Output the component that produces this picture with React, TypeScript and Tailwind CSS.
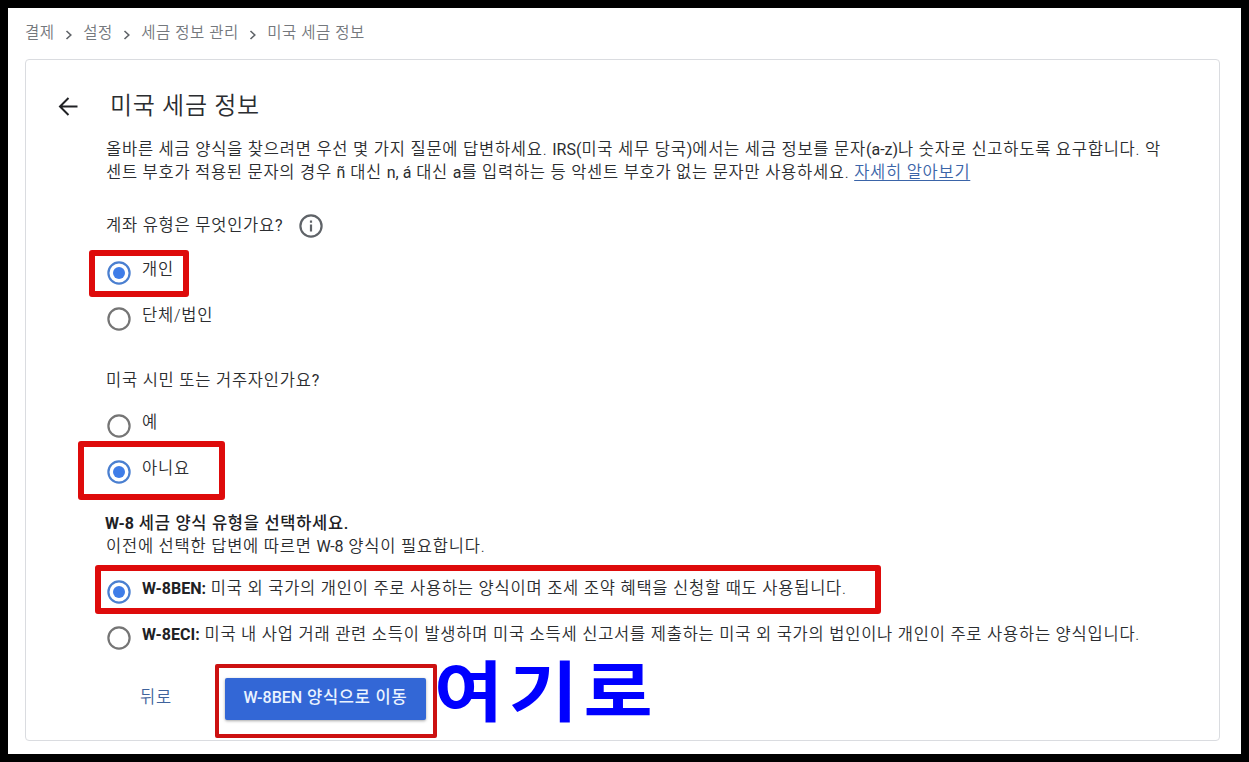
import { useState } from 'react';
import type { ReactNode } from 'react';

const CRUMBS = ['결제', '설정', '세금 정보 관리', '미국 세금 정보'];

export default function App() {
  const [account, setAccount] = useState('individual');
  const [resident, setResident] = useState('no');
  const [form, setForm] = useState('w8ben');

  return (
    <div className="h-[762px] w-[1249px] overflow-hidden border-8 border-black bg-white font-[Roboto,'Noto_Sans_CJK_KR',sans-serif] text-[#2b2d30]">
      <nav className="flex h-[51px] items-center pl-[17px] text-[15.5px] font-[350] tracking-[0.55px] text-[#74787d]">
        {CRUMBS.map((crumb, i) => (
          <div key={crumb} className="flex items-center">
            {i > 0 && <Chevron />}
            <span className="whitespace-nowrap">{crumb}</span>
          </div>
        ))}
      </nav>

      <main className="relative ml-[17px] h-[682px] w-[1195px] rounded border border-[#dadce0] text-[16.5px] font-[350] leading-[23px] tracking-[0.76px]">
        <header className="mt-[22px] flex h-12 items-center pl-[30px]">
          <button aria-label="뒤로" className="text-[#202124]">
            <BackArrow />
          </button>
          <h1 className="ml-[30px] whitespace-nowrap text-[24px] font-[350] leading-8 tracking-[0.7px]">미국 세금 정보</h1>
        </header>

        <div className="flex flex-col pl-20">
          <div className="mt-2 whitespace-nowrap tracking-[0.73px]">
            <p className="h-[23px] tracking-[0.76px]">
              올바른 세금 양식을 찾으려면 우선 몇 가지 질문에 답변하세요. <Latin>IRS(</Latin>미국 세무 당국<Latin>)</Latin>에서는 세금 정보를 문자<Latin>(a-z)</Latin>나 숫자로 신고하도록 요구합니다. 악
            </p>
            <p className="h-[23px]">
              센트 부호가 적용된 문자의 경우 <Latin>ñ</Latin> 대신 <Latin>n, á</Latin> 대신 <Latin>a</Latin>를 입력하는 등 악센트 부호가 없는 문자만 사용하세요.{' '}
              <a className="text-[#3a64a8] underline underline-offset-2">자세히 알아보기</a>
            </p>
          </div>

          <div className="mt-[29px] flex h-6 items-center gap-4">
            <span>계좌 유형은 무엇인가요<Latin>?</Latin></span>
            <InfoIcon />
          </div>
          <div className="mt-[13px]">
            <Option checked={account === 'individual'} onSelect={() => setAccount('individual')}>개인</Option>
            <Option checked={account === 'entity'} onSelect={() => setAccount('entity')}>단체/법인</Option>
          </div>

          <div className="mt-[26px] flex h-6 items-center">
            <span>미국 시민 또는 거주자인가요<Latin>?</Latin></span>
          </div>
          <div className="mt-[11px]">
            <Option checked={resident === 'yes'} onSelect={() => setResident('yes')}>예</Option>
            <Option checked={resident === 'no'} onSelect={() => setResident('no')}>아니요</Option>
          </div>

          <div className="mt-[17px] whitespace-nowrap tracking-[0.76px]">
            <p className="-ml-px h-[23px] font-medium tracking-[0.7px] text-[#202124]">
              <span className="text-base leading-none font-bold tracking-normal">W-8</span> 세금 양식 유형을 선택하세요.
            </p>
            <p className="h-[23px]">이전에 선택한 답변에 따르면 <Latin>W-8</Latin> 양식이 필요합니다.</p>
          </div>
          <div className="mt-[11px]">
            <Option checked={form === 'w8ben'} onSelect={() => setForm('w8ben')}>
              <b className="text-base leading-none font-bold tracking-normal text-[#202124]">W-8BEN:</b> 미국 외 국가의 개인이 주로 사용하는 양식이며 조세 조약 혜택을 신청할 때도 사용됩니다.
            </Option>
            <Option checked={form === 'w8eci'} onSelect={() => setForm('w8eci')}>
              <b className="text-base leading-none font-bold tracking-normal text-[#202124]">W-8ECI:</b> 미국 내 사업 거래 관련 소득이 발생하며 미국 소득세 신고서를 제출하는 미국 외 국가의 법인이나 개인이 주로 사용하는 양식입니다.
            </Option>
          </div>

          <div className="mt-[17px] flex h-[42px] items-center">
            <button className="mb-1 ml-[34px] w-[32px] whitespace-nowrap text-[#3f639c]">뒤로</button>
            <button className="ml-[53px] h-[42px] w-[201px] whitespace-nowrap rounded-[2px] bg-[#3367d6] pb-[3px] font-medium text-[#eaf3ff] shadow-[0_1px_3px_rgba(0,0,0,0.35)]">
              <span className="text-base leading-none tracking-normal">W-8BEN</span> 양식으로 이동
            </button>
          </div>
        </div>

        {/* hand-drawn highlights over the form */}
        <div className="pointer-events-none absolute left-[63px] top-[190px] h-[47px] w-[100px] rounded-[3px] border-[6px] border-[#de0b0b]" />
        <div className="pointer-events-none absolute left-[52px] top-[381px] h-[59px] w-[147px] rounded-[3px] border-[6px] border-[#de0b0b]" />
        <div className="pointer-events-none absolute left-[69px] top-[505px] h-[49px] w-[786px] rounded-[3px] border-[6px] border-[#de0b0b]" />
        <div className="pointer-events-none absolute left-[189px] top-[604px] h-[74px] w-[222px] rounded-[2px] border-4 border-[#cc1111]" />
        <div className="pointer-events-none absolute left-[408px] top-[586px] origin-left scale-x-[1.14] whitespace-nowrap text-[66px] font-bold leading-[96px] tracking-[4.8px] text-[#0000ff]">
          여기로
        </div>
      </main>
    </div>
  );
}

function Latin({ children }: { children: ReactNode }) {
  return <span className="text-base leading-none font-normal tracking-normal">{children}</span>;
}

function Option({ checked, onSelect, children }: { checked: boolean; onSelect: () => void; children: ReactNode }) {
  return (
    <div
      role="radio"
      aria-checked={checked}
      onClick={onSelect}
      className="flex h-[46px] cursor-pointer items-center gap-[11px] whitespace-nowrap pl-px"
    >
      <svg width="24" height="24" viewBox="0 0 24 24" className="shrink-0">
        <circle cx="12" cy="12" r="10.6" fill="none" stroke={checked ? '#4a7fd0' : '#757575'} strokeWidth="2.2" />
        {checked && <circle cx="12" cy="12" r="6" fill="#3f7de8" />}
      </svg>
      <div className="mb-[7px]">{children}</div>
    </div>
  );
}

function Chevron() {
  return (
    <svg width="8" height="10" viewBox="0 0 8 10" className="ml-[10.5px] mr-[10px] mt-[3px]" fill="none" stroke="#5f6368" strokeWidth="1.6">
      <path d="M1.5 1l4.3 4-4.3 4" />
    </svg>
  );
}

function BackArrow() {
  return (
    <svg width="24" height="24" viewBox="0 0 24 24" fill="none" stroke="currentColor" strokeWidth="2">
      <path d="M21.5 12.5H4.5M12.5 4l-8.5 8.5 8.5 8.5" />
    </svg>
  );
}

function InfoIcon() {
  return (
    <svg width="24" height="24" viewBox="0 0 24 24" fill="none" stroke="#5f6368" className="mt-[2px]">
      <circle cx="12" cy="12" r="10.6" strokeWidth="2.2" />
      <path d="M12 10.5v7M12 6.5v2.2" strokeWidth="2.2" />
    </svg>
  );
}
